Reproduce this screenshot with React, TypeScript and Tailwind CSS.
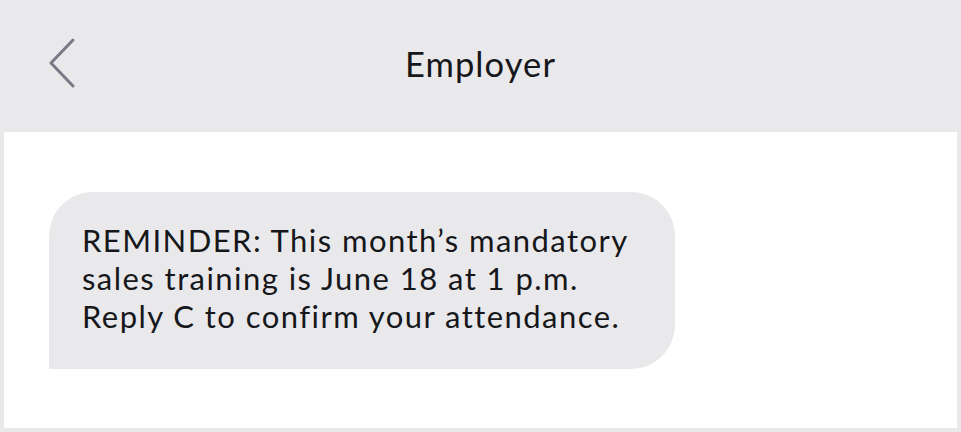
import React from 'react';

const ChevronLeft: React.FC = () => (
  <svg width="30" height="52" viewBox="0 0 30 52" fill="none" className="block">
    <path
      d="M26 3 L4 26 L26 49"
      stroke="#7c7987"
      strokeWidth="3"
      strokeLinecap="round"
      strokeLinejoin="round"
    />
  </svg>
);

export default function App() {
  return (
    <div
      className="w-[961px] h-[432px] bg-[#e9e9eb] flex flex-col text-[#16171a]"
      style={{ fontFamily: 'Lato, "Noto Sans", sans-serif' }}
    >
      <header className="h-[132px] flex items-center relative shrink-0">
        <button className="absolute left-[47px] top-[37px]">
          <ChevronLeft />
        </button>
        <h1 className="w-full text-center text-[34.5px] leading-none pb-[3px] tracking-[1.1px]">
          Employer
        </h1>
      </header>
      <main className="flex-1 bg-white mx-1 mb-1 pt-[60px] pl-[45px]">
        <div className="w-[626px] bg-[#e9e9eb] rounded-[44px] rounded-bl-none pl-[33px] pt-[29px] pb-[34px] text-[31px] leading-[38px] tracking-[1.45px]">
          <p>REMINDER: This month’s mandatory</p>
          <p>sales training is June 18 at 1 p.m.</p>
          <p>Reply C to confirm your attendance.</p>
        </div>
      </main>
    </div>
  );
}
